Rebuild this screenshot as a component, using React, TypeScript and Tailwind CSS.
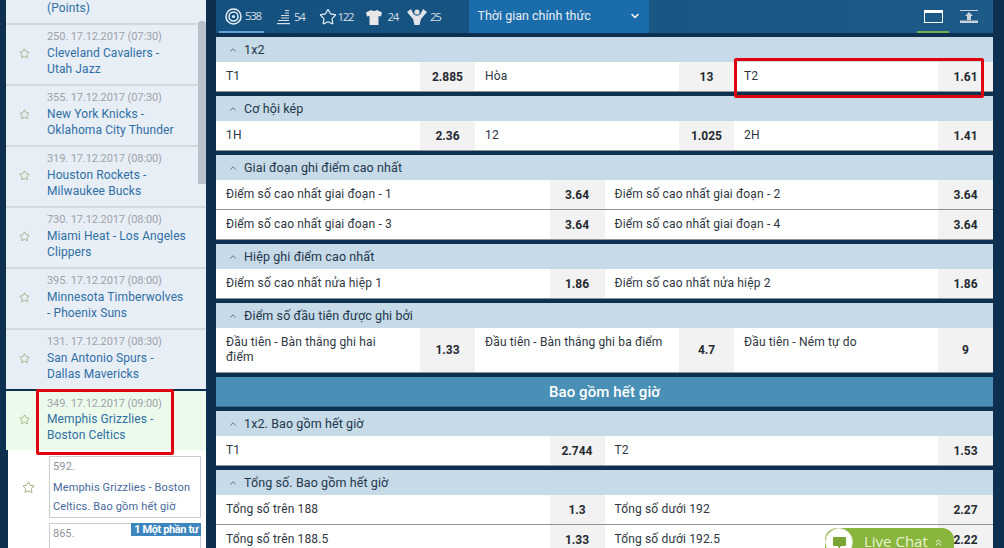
import { ChevronDown, ChevronUp, ChevronsUp, Star } from "lucide-react";

const events = [
  { meta: "250. 17.12.2017 (07:30)", name: "Cleveland Cavaliers -\nUtah Jazz" },
  { meta: "355. 17.12.2017 (07:30)", name: "New York Knicks -\nOklahoma City Thunder" },
  { meta: "319. 17.12.2017 (08:00)", name: "Houston Rockets -\nMilwaukee Bucks" },
  { meta: "730. 17.12.2017 (08:00)", name: "Miami Heat - Los Angeles\nClippers" },
  { meta: "395. 17.12.2017 (08:00)", name: "Minnesota Timberwolves\n- Phoenix Suns" },
  { meta: "131. 17.12.2017 (08:30)", name: "San Antonio Spurs -\nDallas Mavericks" },
];

type Cell = [string, string];

interface MarketProps {
  title: string;
  rows: Cell[][];
  tall?: boolean;
}

function SmallStar({ size = 11 }: { size?: number }) {
  return <Star size={size} strokeWidth={1.5} className="text-[#8a9a63]" />;
}

function EventRow({ meta, name }: { meta: string; name: string }) {
  return (
    <div className="flex h-[59px] mb-[2px] bg-[#e8eef6]">
      <div className="flex w-[41px] shrink-0 items-center pl-[13px] pb-[2px]">
        <SmallStar />
      </div>
      <div className="pt-[4px] text-[12px] leading-[16px] tracking-[0.1px]">
        <div className="text-[11px] tracking-[-0.1px] text-[#9ca3ab]">{meta}</div>
        <div className="whitespace-pre-line text-[#2f6fa3]">{name}</div>
      </div>
    </div>
  );
}

function Sidebar() {
  return (
    <aside className="relative ml-[6px] w-[200px] shrink-0">
      <div className="bg-[#d5d9dd]">
        <div className="flex h-[23px] mb-[2px] items-end bg-[#e8eef6] pb-[7px] pl-[41px] text-[12px] leading-[16px] tracking-[0.1px] text-[#2f6fa3]">
          (Points)
        </div>
        {events.map((e) => (
          <EventRow key={e.meta} {...e} />
        ))}
      </div>
      <div className="flex h-[59px] bg-[#ecfaec]">
        <div className="flex w-[41px] shrink-0 items-center pl-[13px] pb-[2px]">
          <SmallStar />
        </div>
        <div className="pt-[5px] text-[12px] leading-[16px] tracking-[0.1px]">
          <div className="text-[11px] leading-[15px] tracking-[-0.1px] text-[#9ca3ab]">349. 17.12.2017 (09:00)</div>
          <div className="whitespace-pre-line text-[#2f6fa3]">{"Memphis Grizzlies -\nBoston Celtics"}</div>
        </div>
      </div>
      <div className="ml-[2px] h-[130px] bg-white pt-[6px]">
        <div className="flex">
          <div className="flex w-[41px] shrink-0 items-center pl-[14px]">
            <SmallStar size={13} />
          </div>
          <div className="h-[62px] w-[152px] border border-[#c9ccd0] px-[3px] text-[11px] leading-[19px] tracking-[0.15px] text-[#46699a]">
            <div className="text-[#8f959b]">592.</div>
            <div className="mt-[2px]">Memphis Grizzlies - Boston Celtics. Bao gồm hết giờ</div>
          </div>
        </div>
        <div className="mt-[5px] flex">
          <div className="flex w-[41px] shrink-0 items-end pl-[14px]">
            <SmallStar size={13} />
          </div>
          <div className="relative h-[60px] w-[152px] border border-[#c9ccd0] px-[3px] text-[11px] leading-[19px] text-[#8f959b]">
            865.
            <span className="absolute -right-px -top-px bg-[#3d86bd] px-[3px] text-[11px] font-bold leading-[13px] tracking-[-0.4px] text-white">
              1 Một phần tư
            </span>
          </div>
        </div>
      </div>
      {/* scrollbar */}
      <div className="absolute right-0 top-[21px] h-[163px] w-[8px] rounded-t-[3px] bg-[#b9c2cc]" />
      {/* highlight */}
      <div className="absolute left-[30px] top-[389px] h-[66px] w-[138px] rounded-[2px] border-[3px] border-[#e0000f]" />
    </aside>
  );
}

function TargetIcon() {
  return (
    <svg width="17" height="17" viewBox="0 0 17 17" fill="none" stroke="#e6eef5">
      <circle cx="8.5" cy="8.5" r="7.5" strokeWidth="1.5" />
      <circle cx="8.5" cy="8.5" r="4.5" strokeWidth="1.5" />
      <circle cx="8.5" cy="8.5" r="1.6" fill="#e6eef5" stroke="none" />
    </svg>
  );
}

function BarsIcon() {
  return (
    <svg width="13" height="15" viewBox="0 0 13 15" fill="#d5dfe8">
      <rect x="8" y="0" width="4" height="1" />
      <rect x="8" y="2.5" width="4" height="1" />
      <rect x="4" y="5" width="8" height="1" />
      <rect x="4" y="7.5" width="8" height="1" />
      <rect x="1" y="10" width="11" height="1" />
      <rect x="0" y="13" width="13" height="1.2" />
    </svg>
  );
}

function ShirtIcon() {
  return (
    <svg width="16" height="15" viewBox="0 0 16 15" fill="#e8e8e8">
      <path d="M5 0 Q8 2 11 0 L16 2.5 L15 6.5 L12.5 6 L12.5 15 L3.5 15 L3.5 6 L1 6.5 L0 2.5 Z" />
    </svg>
  );
}

function TrophyIcon() {
  return (
    <svg width="20" height="16" viewBox="0 0 20 16" fill="#e0e4e8">
      <path d="M0 3 L4 0 L6.5 5 Q10 8.5 13.5 5 L16 0 L20 3 L14 10 L12.5 16 L7.5 16 L6 10 Z" />
      <circle cx="10" cy="3" r="2.6" />
    </svg>
  );
}

const countClass =
  "flex items-center font-['Open_Sans',sans-serif] text-[11.5px] tracking-[-1.3px]";

function TopBar() {
  return (
    <div className="flex h-[33px] items-stretch justify-between bg-gradient-to-r from-[#15517f] to-[#1d5a88] text-[#d5dfe8]">
      <div className="flex items-stretch">
        <div className={`${countClass} ml-[3px] w-[45px] gap-[3px] border-b-2 border-[#5fa3d8] pl-[6px] pt-[1px]`}>
          <TargetIcon />
          538
        </div>
        <div className={`${countClass} ml-[13px] gap-[4px] pt-[1px]`}>
          <BarsIcon />
          54
        </div>
        <div className={`${countClass} ml-[14px] gap-[1px] pt-[1px]`}>
          <Star size={18} strokeWidth={1.6} className="text-[#e6eef5]" />
          122
        </div>
        <div className={`${countClass} ml-[13px] gap-[5px] pt-[1px]`}>
          <ShirtIcon />
          24
        </div>
        <div className={`${countClass} ml-[9px] gap-[3px] pt-[1px]`}>
          <TrophyIcon />
          25
        </div>
        <div className="ml-[28px] flex w-[180px] items-center justify-between bg-[#1b6cab] pb-[1px] pl-[9px] pr-[8px] text-[12.5px] text-[#e8eef4]">
          Thời gian chính thức
          <ChevronDown size={12} strokeWidth={3} className="text-white" />
        </div>
      </div>
      <div className="flex items-stretch pr-[15px]">
        <div className="flex w-[32px] items-start justify-center border-b-2 border-[#6fae4f] pt-[10px]">
          <div className="h-[13px] w-[19px] border-[1.5px] border-t-[3px] border-white" />
        </div>
        <div className="ml-[11px] flex w-[18px] items-start pt-[10px]">
          <svg width="18" height="13" viewBox="0 0 18 13" fill="#c9d2d9">
            <rect x="0" y="0" width="18" height="1" />
            <path d="M9 2 L13 6 L11 6 L11 10 L7 10 L7 6 L5 6 Z" />
            <rect x="0" y="10.5" width="18" height="2.5" />
          </svg>
        </div>
      </div>
    </div>
  );
}

function Market({ title, rows, tall }: MarketProps) {
  return (
    <section className="mt-[4px]">
      <div className="flex h-[25px] items-center bg-[#c6dbe7] pl-[12px] pt-[1px] text-[12.5px] tracking-[0.1px] text-[#23364d]">
        <ChevronUp size={10} strokeWidth={1.5} className="mr-[6px]" />
        {title}
      </div>
      {rows.map((row, i) => (
        <div key={i} className={`flex border-b border-[#8d959c] ${tall ? "h-[45px]" : "h-[30px]"}`}>
          {row.map(([label, odd]) => (
            <div key={label} className="flex min-w-0 flex-1 bg-white text-[12px]">
              <div className="flex-1 pl-[10px] pr-[15px] pt-[7px] leading-[15px] tracking-[0.15px] text-[#2d3640]">
                {label}
              </div>
              <div className="flex w-[55px] shrink-0 items-center justify-center bg-[#f2f2f2] font-bold text-[#252a30]">
                {odd}
              </div>
            </div>
          ))}
        </div>
      ))}
    </section>
  );
}

export default function App() {
  return (
    <div className="relative flex h-[548px] w-[1004px] overflow-hidden bg-[#0d3050] font-['Roboto',sans-serif]">
      <Sidebar />
      <main className="ml-[10px] w-[777px] shrink-0">
        <TopBar />
        <Market title="1x2" rows={[[["T1", "2.885"], ["Hòa", "13"], ["T2", "1.61"]]]} />
        <Market title="Cơ hội kép" rows={[[["1H", "2.36"], ["12", "1.025"], ["2H", "1.41"]]]} />
        <Market
          title="Giai đoạn ghi điểm cao nhất"
          rows={[
            [["Điểm số cao nhất giai đoạn - 1", "3.64"], ["Điểm số cao nhất giai đoạn - 2", "3.64"]],
            [["Điểm số cao nhất giai đoạn - 3", "3.64"], ["Điểm số cao nhất giai đoạn - 4", "3.64"]],
          ]}
        />
        <Market
          title="Hiệp ghi điểm cao nhất"
          rows={[[["Điểm số cao nhất nửa hiệp 1", "1.86"], ["Điểm số cao nhất nửa hiệp 2", "1.86"]]]}
        />
        <Market
          title="Điểm số đầu tiên được ghi bởi"
          tall
          rows={[
            [
              ["Đầu tiên - Bàn thắng ghi hai điểm", "1.33"],
              ["Đầu tiên - Bàn thắng ghi ba điểm", "4.7"],
              ["Đầu tiên - Ném tự do", "9"],
            ],
          ]}
        />
        <div className="mt-[4px] flex h-[30px] items-center justify-center border-b border-[#3a6c8c] bg-[#4a8fb5] pt-[1px] text-[15px] font-medium tracking-[0.1px] text-white">
          Bao gồm hết giờ
        </div>
        <Market title="1x2. Bao gồm hết giờ" rows={[[["T1", "2.744"], ["T2", "1.53"]]]} />
        <Market
          title="Tổng số. Bao gồm hết giờ"
          rows={[
            [["Tổng số trên 188", "1.3"], ["Tổng số dưới 192", "2.27"]],
            [["Tổng số trên 188.5", "1.33"], ["Tổng số dưới 192.5", "2.22"]],
          ]}
        />
      </main>
      {/* red highlight over T2 */}
      <div className="absolute left-[734px] top-[58px] h-[40px] w-[250px] rounded-[2px] border-[3px] border-[#e0000f]" />
      {/* live chat tab */}
      <div className="absolute left-[825px] top-[528px] flex h-[20px] w-[129px] items-start rounded-t-[12px] bg-[#8ab53c] pl-[39px] pt-[6px] font-['Open_Sans',sans-serif] text-[15px] leading-[14px] text-[#e8f3d4]">
        <div className="absolute left-0 top-0 flex h-[28px] w-[28px] items-start justify-center rounded-full border-[1px] border-[#dfe8cf] bg-white pt-[8px]">
          <svg width="13" height="12" viewBox="0 0 13 12" fill="#7aa535">
            <path d="M1 0 H12 a1 1 0 0 1 1 1 V8 a1 1 0 0 1 -1 1 H8 L6 12 L5 9 H1 a1 1 0 0 1 -1 -1 V1 a1 1 0 0 1 1 -1 Z" />
          </svg>
        </div>
        Live Chat
        <ChevronsUp size={11} strokeWidth={2} className="ml-[5px] mt-[3px] text-white" />
      </div>
    </div>
  );
}
